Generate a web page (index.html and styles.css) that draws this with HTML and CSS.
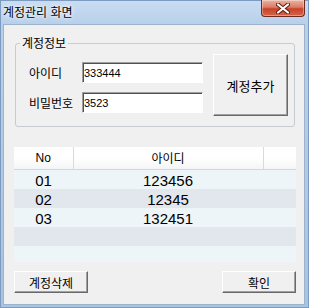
FILE: index.html
```html
<!DOCTYPE html>
<html lang="ko">
<head>
<meta charset="UTF-8" />
<meta name="viewport" content="width=device-width, initial-scale=1.0" />
<title>계정관리 화면</title>
<link rel="stylesheet" href="styles.css">
</head>
<body>

<div class="window">
  <div class="titlebar">
    <span class="title">계정관리 화면</span>
    <button class="close-btn" aria-label="닫기">
      <svg width="14" height="11" viewBox="0 0 14 11">
        <path d="M2 1.5 L12 9.5 M12 1.5 L2 9.5" stroke="#5a1a10" stroke-width="4" stroke-linecap="round" />
        <path d="M2 1.5 L12 9.5 M12 1.5 L2 9.5" stroke="#fff" stroke-width="2.2" stroke-linecap="round" />
      </svg>
    </button>
  </div>

  <div class="client">
    <fieldset class="account-box">
      <legend>계정정보</legend>
      <div class="account-row">
        <div class="fields">
          <div class="field">
            <label for="account">아이디</label>
            <input type="text" id="account" value="333444" />
          </div>
          <div class="field">
            <label for="pin">비밀번호</label>
            <input type="text" id="pin" value="3523" />
          </div>
        </div>
        <button class="btn add-btn">계정추가</button>
      </div>
    </fieldset>

    <div class="list">
      <table>
        <colgroup>
          <col class="col-no" />
          <col class="col-id" />
          <col />
        </colgroup>
        <thead>
          <tr><th>No</th><th>아이디</th><th></th></tr>
        </thead>
        <tbody>
          <tr><td>01</td><td>123456</td><td></td></tr>
          <tr><td>02</td><td>12345</td><td></td></tr>
          <tr><td>03</td><td>132451</td><td></td></tr>
          <tr><td></td><td></td><td></td></tr>
          <tr><td></td><td></td><td></td></tr>
        </tbody>
      </table>
    </div>

    <div class="actions">
      <button class="btn">계정삭제</button>
      <button class="btn">확인</button>
    </div>
  </div>
</div>

</body>
</html>
```

FILE: styles.css
```css
* {
  box-sizing: border-box;
}

body {
  margin: 0;
  font-family: "Liberation Sans", "Noto Sans CJK KR", sans-serif;
}

.window {
  width: 309px;
  height: 308px;
  display: flex;
  flex-direction: column;
  background: linear-gradient(180deg, #c9ddf2 0, #b8d0ea 24px, #a8c4e3 100%);
  box-shadow: inset 0 0 0 1px #7d9bc0;
}

.titlebar {
  height: 24px;
  display: flex;
  justify-content: space-between;
  align-items: flex-start;
  padding: 0 4px 0 3px;
}

.title {
  font-family: "Noto Sans CJK KR", sans-serif;
  font-size: 12px;
  line-height: 24px;
  color: #000;
  text-shadow: 0 0 6px #fff, 0 0 3px #fff;
}

.close-btn {
  width: 44px;
  height: 17px;
  padding: 0;
  border: 1px solid #6e2a1e;
  border-top: none;
  border-radius: 0 0 4px 4px;
  background: linear-gradient(180deg, #eab3a3 0, #dc7c66 45%, #c8432a 55%, #d4654a 100%);
  box-shadow: inset 0 0 0 1px rgba(255,255,255,0.35);
  display: flex;
  justify-content: center;
  align-items: center;
}

.client {
  flex: 1;
  margin: 0 4px 3px 3px;
  background: #f0f0f0;
  border: 1px solid #9db3cc;
  padding: 11px 8px 11px 10px;
  display: flex;
  flex-direction: column;
}

.account-box {
  margin: 0 1px;
  width: 280px;
  border: 1px solid #c6ccd2;
  border-radius: 3px;
  padding: 4px 6px 10px 13px;
}

.account-box legend {
  font-family: "Noto Sans CJK KR", sans-serif;
  font-size: 12px;
  line-height: 14px;
  margin-left: -9px;
  padding: 0 2px;
}

.account-row {
  display: flex;
  align-items: flex-start;
  gap: 10px;
}

.fields {
  margin-top: 8px;
  display: flex;
  flex-direction: column;
  gap: 9px;
}

.field {
  display: flex;
  align-items: center;
  height: 21px;
}

.field label {
  width: 53px;
  font-family: "Noto Sans CJK KR", sans-serif;
  font-size: 12px;
  line-height: 14px;
}

.field input {
  width: 121px;
  height: 21px;
  margin: 0;
  padding: 0 1px;
  font-family: "Liberation Sans", sans-serif;
  font-size: 11px;
  color: #000;
  background: #fff;
  border: 1px solid;
  border-color: #a0a0a0 #fff #fff #a0a0a0;
  box-shadow: inset 1px 1px #505050;
  outline: none;
}

.btn {
  width: 74px;
  height: 22px;
  padding: 0;
  font-family: "Noto Sans CJK KR", sans-serif;
  font-size: 12px;
  color: #000;
  background: #f0f0f0;
  border: 1px solid;
  border-color: #fff #696969 #696969 #fff;
  box-shadow: inset -1px -1px #a0a0a0;
}

.add-btn {
  width: 75px;
  height: 62px;
  font-size: 13px;
}

.list {
  margin-top: 20px;
  height: 115px;
  overflow: hidden;
  background: #eef5f8;
}

.list table {
  width: 100%;
  table-layout: fixed;
  border-collapse: collapse;
}

.col-no {
  width: 59px;
}

.col-id {
  width: 190px;
}

.list th {
  height: 22px;
  padding: 0;
  font-family: "Liberation Sans", "Noto Sans CJK KR", sans-serif;
  font-size: 12px;
  font-weight: normal;
  background: linear-gradient(180deg, #fff 0, #fff 50%, #f4f5f7 100%);
  border-bottom: 1px solid #d5d5d5;
  border-right: 1px solid #dadada;
}

.list th:last-child {
  border-right: none;
}

.list td {
  height: 19px;
  padding: 2px 0 0;
  line-height: 17px;
  font-family: "Liberation Sans", sans-serif;
  font-size: 15px;
  color: #000;
  text-align: center;
}

.list tbody tr:nth-child(odd) {
  background: #eef5f8;
}

.list tbody tr:nth-child(even) {
  background: #e2e7ed;
}

.actions {
  margin-top: 9px;
  display: flex;
  justify-content: space-between;
}
```
